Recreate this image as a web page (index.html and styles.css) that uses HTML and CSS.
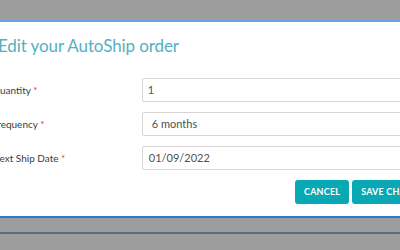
FILE: index.html
```html
<!DOCTYPE html>
<html lang="en">
    <head>
        <meta charset="UTF-8">
        <meta name="viewport" content="width=device-width, initial-scale=1.0">
        <link rel="stylesheet" href="styles.css">
        <title>Edit your AutoShip order</title>
    </head>
    <body>
        <!--======================= モーダル =======================-->
        <div class="modal">
            <h1 class="modalTitle">Edit your AutoShip order</h1>

            <form class="orderForm">
                <div class="formRow">
                    <label class="formLabel">Quantity <span class="required">*</span></label>
                    <div class="formInput">1</div>
                </div>
                <div class="formRow">
                    <label class="formLabel">Frequency <span class="required">*</span></label>
                    <div class="formInput formSelect">6 months</div>
                </div>
                <div class="formRow">
                    <label class="formLabel">Next Ship Date <span class="required">*</span></label>
                    <div class="formInput formDate">01/09/2022</div>
                </div>

                <div class="buttons">
                    <div class="button">CANCEL</div>
                    <div class="button">SAVE CHANGES</div>
                </div>
            </form>
        </div>

        <div class="footerBar"></div>
    </body>
</html>
```

FILE: styles.css
```css
body{
    margin: 0;
    font-family: Lato, "Open Sans", sans-serif;
    background-color: rgb(157, 157, 157);
    overflow: hidden;
}

/*************************************************************************************************/

/* モーダル本体 */
.modal{
    margin-top: 20px;
    margin-left: -8px;
    width: 440px;
    height: 198px;
    box-sizing: border-box;
    background-color: white;
    border-top: 2px solid rgb(104, 160, 228);
    border-bottom: 2px solid rgb(40, 120, 216);
}

.modalTitle{
    margin: 0;
    padding: 13px 0 0 6px;
    height: 43px;
    font-weight: 400;
    font-size: 17px;
    letter-spacing: -0.1px;
    color: rgb(84, 176, 192);
}

/*************************************************************************************************/

/* 入力欄 */
.formRow{
    display: flex;
    align-items: center;
    margin-bottom: 10px;
}

.formLabel{
    width: 155px;
    font-size: 10px;
    color: rgb(60, 60, 60);
}

.required{
    color: rgb(220, 60, 60);
}

.formInput{
    width: 300px;
    height: 24px;
    box-sizing: border-box;
    border: 1px solid rgb(214, 214, 214);
    border-radius: 2px;
    padding-left: 5px;
    line-height: 22px;
    font-size: 11px;
    color: rgb(80, 80, 80);
}

.formSelect{
    padding-left: 9px;
}

.formDate{
    padding-left: 6px;
}

/*************************************************************************************************/

/* ボタン */
.buttons{
    display: flex;
    gap: 3px;
    margin-left: 303px;
    margin-top: 7px;
}

.button{
    height: 24px;
    line-height: 24px;
    padding: 0 9px;
    border-radius: 3px;
    background-color: rgb(8, 168, 180);
    color: white;
    font-weight: 700;
    font-size: 9px;
    letter-spacing: 0.2px;
    white-space: nowrap;
}

/*************************************************************************************************/

/* 下部の線 */
.footerBar{
    margin-top: 14px;
    height: 2px;
    background-color: rgb(86, 110, 132);
}
```
